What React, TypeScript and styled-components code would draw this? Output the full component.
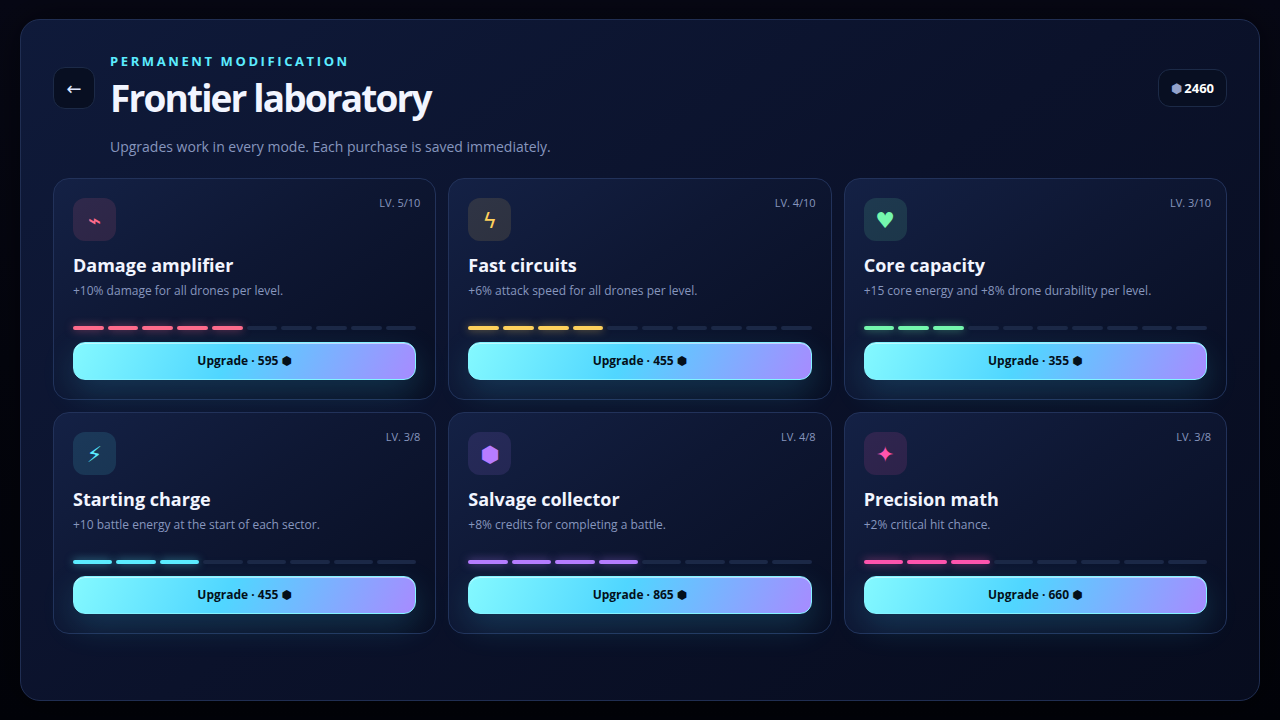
import React from "react";
import styled, { createGlobalStyle } from "styled-components";

const GlobalStyle = createGlobalStyle`
  *, *::before, *::after { box-sizing: border-box; }
  body {
    margin: 0;
    background: #03040c;
    color: #f2f5ff;
    font-family: "Open Sans", "DejaVu Sans", sans-serif;
    font-size: 14px;
    text-rendering: optimizeSpeed;
  }
  h1, h2, p { margin: 0; }
`;

const Page = styled.div`
  display: flex;
  min-height: 100vh;
  padding: 19px 20px;
  background: linear-gradient(180deg, #070815 0%, #04050e 50%, #020309 100%);
`;

const Panel = styled.main`
  flex: 1;
  min-width: 0;
  padding: 32px;
  border: 1px solid #202e52;
  border-radius: 20px;
  background: linear-gradient(145deg, #0f1a3a 0%, #0b122b 50%, #070c1e 100%);
  box-shadow: 0 0 40px rgba(0, 0, 0, 0.5);
`;

const Header = styled.header`
  display: flex;
  align-items: center;
  gap: 15px;
  min-height: 72px;
`;

const BackButton = styled.button`
  width: 42px;
  height: 42px;
  padding: 0;
  border: 1px solid #1c2a47;
  border-radius: 12px;
  background: #080f22;
  color: #dfe8ff;
  font: inherit;
  font-size: 18px;
  cursor: pointer;
`;

const Heading = styled.div`
  flex: 1;
`;

const Eyebrow = styled.p`
  color: #5cecff;
  font-size: 13px;
  font-weight: 700;
  line-height: 18px;
  letter-spacing: 0.2em;
  text-transform: uppercase;
`;

const Title = styled.h1`
  margin-top: 2px;
  font-size: 37px;
  font-weight: 700;
  line-height: 52px;
  letter-spacing: -0.05em;
`;

const Balance = styled.div`
  display: flex;
  align-items: center;
  gap: 2px;
  height: 38px;
  padding: 0 12px;
  border: 1px solid #1c2a47;
  border-radius: 12px;
  background: #080f22;
  color: #94a3cc;
  font-size: 13px;

  strong {
    color: #ffffff;
  }
`;

const Intro = styled.p`
  margin: 12px 0 20px 57px;
  color: #8796be;
  font-size: 14px;
  line-height: 22px;
`;

const Grid = styled.section`
  display: grid;
  grid-template-columns: repeat(3, minmax(0, 1fr));
  gap: 12px;
`;

const Card = styled.article`
  position: relative;
  display: flex;
  flex-direction: column;
  padding: 19px;
  border: 1px solid #22325a;
  border-radius: 16px;
  background: linear-gradient(145deg, #142145 0%, #0e1733 45%, #080e22 100%);
`;

const Level = styled.span`
  position: absolute;
  top: 16px;
  right: 15px;
  color: #8796be;
  font-size: 11px;
  line-height: 16px;
`;

const Icon = styled.span<{ $color: string }>`
  display: grid;
  place-items: center;
  width: 43px;
  height: 43px;
  padding-bottom: 2px;
  border-radius: 12px;
  background: ${(p) => p.$color}1f;
  color: ${(p) => p.$color};
  font-size: 22px;
`;

const Name = styled.h2`
  margin-top: 12px;
  font-size: 18px;
  font-weight: 700;
  line-height: 25px;
`;

const Description = styled.p`
  min-height: 36px;
  margin-top: 4px;
  color: #8796be;
  font-size: 12px;
  line-height: 18px;
`;

const Track = styled.div`
  display: flex;
  gap: 4px;
  margin: 8px 0 12px;
`;

const Segment = styled.i<{ $color?: string }>`
  flex: 1;
  height: 4px;
  border-radius: 2px;
  background: ${(p) => p.$color ?? "#1c2846"};
  box-shadow: ${(p) => (p.$color ? `0 0 8px ${p.$color}88` : "none")};
`;

const UpgradeButton = styled.button`
  height: 38px;
  padding: 0 16px 2px;
  border: 1px solid #84f3ff;
  border-radius: 12px;
  background: linear-gradient(115deg, #84f9ff 0%, #50d6ff 45%, #a78bff 100%);
  box-shadow: 0 12px 32px rgba(60, 210, 255, 0.18), inset 0 1px 0 rgba(255, 255, 255, 0.5);
  color: #04101a;
  font: inherit;
  font-size: 12px;
  font-weight: 700;
  cursor: pointer;
`;

interface Upgrade {
  name: string;
  description: string;
  icon: string;
  color: string;
  level: number;
  max: number;
  cost: number;
}

const upgrades: Upgrade[] = [
  { name: "Damage amplifier", description: "+10% damage for all drones per level.", icon: "⌁", color: "#ff6b8b", level: 5, max: 10, cost: 595 },
  { name: "Fast circuits", description: "+6% attack speed for all drones per level.", icon: "ϟ", color: "#ffd15c", level: 4, max: 10, cost: 455 },
  { name: "Core capacity", description: "+15 core energy and +8% drone durability per level.", icon: "♥", color: "#75f7ad", level: 3, max: 10, cost: 355 },
  { name: "Starting charge", description: "+10 battle energy at the start of each sector.", icon: "⚡\uFE0E", color: "#5cecff", level: 3, max: 8, cost: 455 },
  { name: "Salvage collector", description: "+8% credits for completing a battle.", icon: "⬢", color: "#b77cff", level: 4, max: 8, cost: 865 },
  { name: "Precision math", description: "+2% critical hit chance.", icon: "✦", color: "#ff54ad", level: 3, max: 8, cost: 660 },
];

function UpgradeCard({ upgrade }: { upgrade: Upgrade }) {
  const { name, description, icon, color, level, max, cost } = upgrade;
  return (
    <Card>
      <Level>LV. {level}/{max}</Level>
      <Icon $color={color} aria-hidden="true">{icon}</Icon>
      <Name>{name}</Name>
      <Description>{description}</Description>
      <Track>
        {Array.from({ length: max }, (_, i) => (
          <Segment key={i} $color={i < level ? color : undefined} />
        ))}
      </Track>
      <UpgradeButton type="button">Upgrade · {cost} ⬢</UpgradeButton>
    </Card>
  );
}

export default function App() {
  return (
    <Page>
      <GlobalStyle />
      <Panel>
        <Header>
          <BackButton type="button" aria-label="Back">←</BackButton>
          <Heading>
            <Eyebrow>Permanent modification</Eyebrow>
            <Title>Frontier laboratory</Title>
          </Heading>
          <Balance>
            <span>⬢</span>
            <strong>2460</strong>
          </Balance>
        </Header>
        <Intro>Upgrades work in every mode. Each purchase is saved immediately.</Intro>
        <Grid>
          {upgrades.map((upgrade) => (
            <UpgradeCard key={upgrade.name} upgrade={upgrade} />
          ))}
        </Grid>
      </Panel>
    </Page>
  );
}
